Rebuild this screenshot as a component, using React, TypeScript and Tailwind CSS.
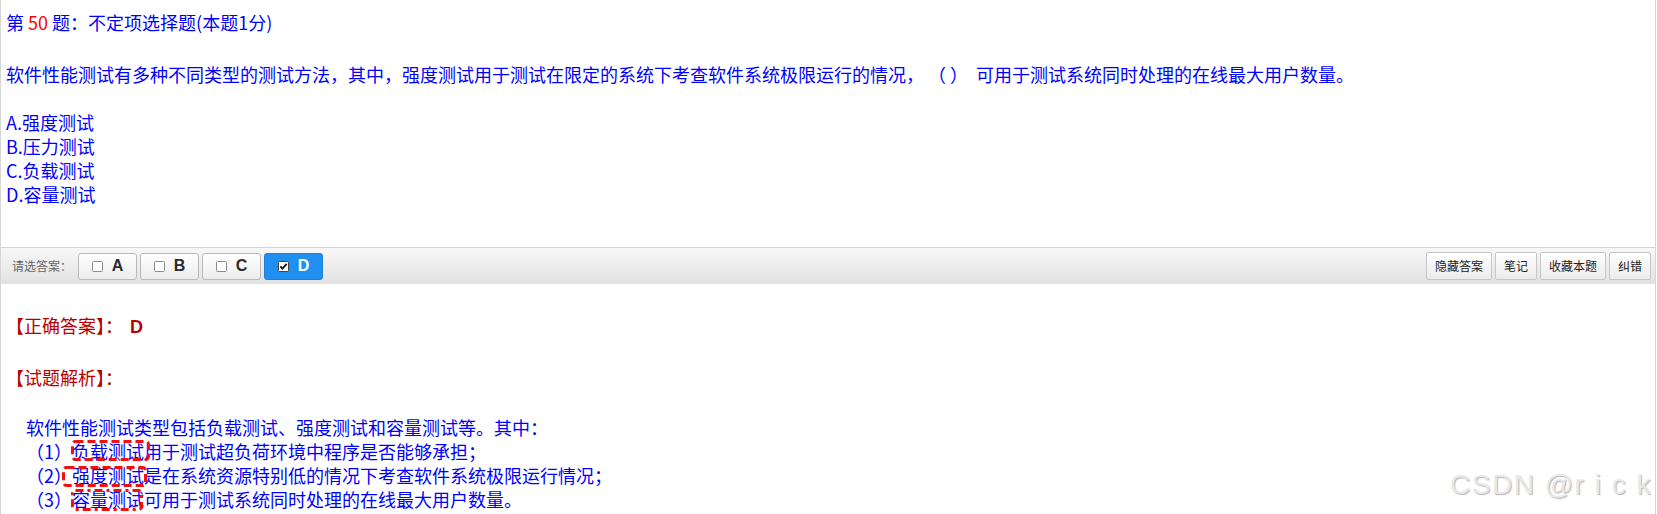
import React from "react";

const cjk = "font-['Noto_Sans_CJK_SC','Microsoft_YaHei',sans-serif]";

function Check({ checked }: { checked?: boolean }) {
  return (
    <svg width="11" height="11" viewBox="0 0 11 11" className="shrink-0">
      <rect x="0.5" y="0.5" width="10" height="10" rx="1" fill="#fff" stroke={checked ? "#444" : "#8a8a8a"} />
      {checked && <path d="M2.3 5.4 L4.4 7.6 L8.7 2.8" fill="none" stroke="#111" strokeWidth="1.8" />}
    </svg>
  );
}

function OptionButton({ letter, checked }: { letter: string; checked?: boolean }) {
  return (
    <button
      className={
        checked
          ? "flex h-[27px] w-[59px] items-center justify-center gap-[9px] rounded-[3px] border border-[#1b82dc] bg-[#1f8ff0] text-white"
          : "flex h-[27px] w-[59px] items-center justify-center gap-[9px] rounded-[3px] border border-[#b9b9b9] bg-gradient-to-b from-[#ffffff] to-[#ececec] text-[#2b2b2b]"
      }
    >
      <Check checked={checked} />
      <span className="font-['Liberation_Sans',Arial,sans-serif] text-[16px] font-bold leading-none">{letter}</span>
    </button>
  );
}

function ToolButton({ label }: { label: string }) {
  return (
    <button className="h-[28px] rounded-[2px] border border-[#c6c6c6] bg-gradient-to-b from-[#ffffff] to-[#ebebeb] px-[8px] text-[12px] leading-[26px] text-[#222]">
      {label}
    </button>
  );
}

function Mark({ children, box }: { children: React.ReactNode; box: "one" | "two" | "three" }) {
  return (
    <span className="relative inline-block">
      {children}
      {box === "one" && (
        <svg width="79" height="21" className="pointer-events-none absolute -left-[1px] top-[1px]">
          <rect x="1.5" y="1.5" width="76" height="18" rx="3" fill="none" stroke="#f01010" strokeWidth="3" strokeDasharray="8 4" />
        </svg>
      )}
      {box === "two" && (
        <svg width="85" height="21" className="pointer-events-none absolute -left-[10px] top-[3px]">
          <rect x="1.5" y="1.5" width="82" height="18" rx="3" fill="none" stroke="#f01010" strokeWidth="3" strokeDasharray="8 4" />
        </svg>
      )}
      {box === "three" && (
        <svg width="72" height="22" className="pointer-events-none absolute -left-[1px] top-[2px]">
          <rect x="1.5" y="1.5" width="69" height="19" rx="3" fill="none" stroke="#f01010" strokeWidth="3" strokeDasharray="8 4 3 4" />
        </svg>
      )}
    </span>
  );
}

export default function App() {
  return (
    <div className={`relative h-[514px] w-[1656px] overflow-hidden border-x border-[#d6d6d6] bg-white ${cjk}`}>
      {/* 题目 */}
      <div className="px-[5px] pt-[10px] text-[18px] leading-[24px] text-[#0000ff]">
        <div>
          第 <span className="text-[#ff0000]">50</span> 题：不定项选择题(本题1分)
        </div>
        <div className="mt-[28px] whitespace-pre">
          软件性能测试有多种不同类型的测试方法，其中，强度测试用于测试在限定的系统下考查软件系统极限运行的情况， （ ）  可用于测试系统同时处理的在线最大用户数量。
        </div>
        <div className="mt-[24px]">A.强度测试</div>
        <div>B.压力测试</div>
        <div>C.负载测试</div>
        <div>D.容量测试</div>
      </div>

      {/* 答题栏 */}
      <div className="mt-[41px] flex h-[37px] items-center justify-between border-t border-[#d4d4d4] bg-gradient-to-b from-[#f7f7f7] to-[#e2e2e2] pl-[11px] pr-[4px]">
        <div className="flex items-center">
          <span className="mr-[6px] text-[12px] text-[#666]">请选答案：</span>
          <div className="flex gap-[3px]">
            <OptionButton letter="A" />
            <OptionButton letter="B" />
            <OptionButton letter="C" />
            <OptionButton letter="D" checked />
          </div>
        </div>
        <div className="flex gap-[3px]">
          <ToolButton label="隐藏答案" />
          <ToolButton label="笔记" />
          <ToolButton label="收藏本题" />
          <ToolButton label="纠错" />
        </div>
      </div>

      {/* 答案与解析 */}
      <div className="px-[5px] text-[18px] leading-[24px]">
        <div className="mt-[29px] text-[#b80000]">
          【正确答案】：<span className="ml-[7px] font-['Liberation_Sans',Arial,sans-serif] font-bold">D</span>
        </div>
        <div className="mt-[26px] text-[#b80000]">【试题解析】：</div>
        <div className="mt-[26px] pl-[20px] text-[#0000ff]">
          <div>软件性能测试类型包括负载测试、强度测试和容量测试等。其中：</div>
          <div>
            （1）<Mark box="one">负载测试</Mark>用于测试超负荷环境中程序是否能够承担；
          </div>
          <div>
            （2）<Mark box="two">强度测试</Mark>是在系统资源特别低的情况下考查软件系统极限运行情况；
          </div>
          <div>
            （3）<Mark box="three">容量测试</Mark>可用于测试系统同时处理的在线最大用户数量。
          </div>
        </div>
      </div>

      {/* 水印 */}
      <div className="absolute right-[3px] top-[471px] whitespace-pre font-['Liberation_Sans',Arial,sans-serif] text-[28px] leading-[28px] tracking-[1.5px] text-[#e8e8e8] [text-shadow:1px_1px_1px_#b4b4b4]">
        CSDN @r i c k
      </div>
    </div>
  );
}
